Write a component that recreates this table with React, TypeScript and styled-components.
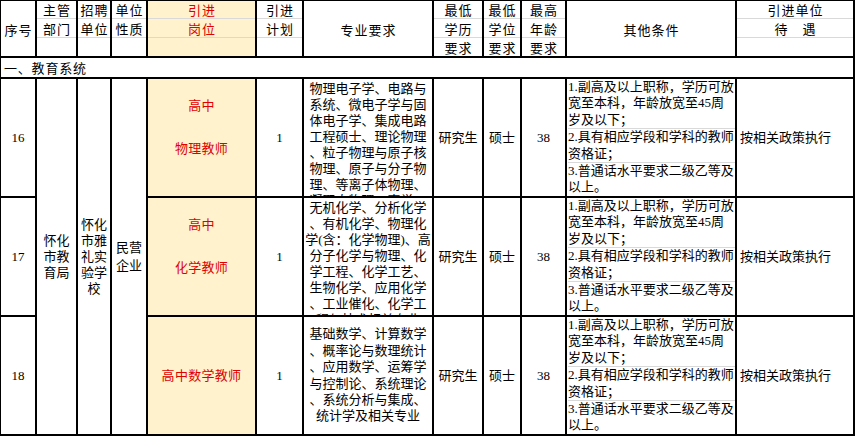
import React from "react";
import styled, { createGlobalStyle } from "styled-components";

const GlobalStyle = createGlobalStyle`
  html, body {
    margin: 0;
    padding: 0;
    background: #fff;
    overflow: hidden;
  }
  body {
    font-family: "Liberation Serif", "Noto Sans CJK SC", serif;
    color: #000;
  }
`;

const YELLOW = "#fff2cc";
const RED = "#e00000";
const RULE = "#d9d9d9";

const Sheet = styled.div`
  display: grid;
  grid-template-columns: 34px 39px 32px 34px 107px 45px 128px 48px 36px 43px 168px 116px;
  grid-template-rows: 55px 19px 117px 117px 117px;
  gap: 2px;
  padding: 2px;
  margin: -1px 0 0 -1px;
  width: max-content;
  background: #000;
  font-size: 13px;
`;

const HeadCell = styled.div<{ $post?: boolean }>`
  display: grid;
  grid-template-rows: repeat(3, 1fr);
  background: ${(p) => (p.$post ? YELLOW : "#fff")};
  color: ${(p) => (p.$post ? RED : "#000")};
`;

const HeadLine = styled.div<{ $ruled?: boolean }>`
  display: flex;
  align-items: flex-end;
  justify-content: center;
  padding-left: 1px;
  line-height: 15px;
  letter-spacing: 1px;
  white-space: nowrap;
  border-bottom: ${(p) => (p.$ruled ? `1px solid ${RULE}` : "none")};
  &:last-child {
    border-bottom: none;
  }
`;

const Section = styled.div`
  grid-column: 1 / -1;
  background: #fff;
  padding: 3px 0 0 3px;
  line-height: 16px;
  letter-spacing: 0.8px;
`;

const Cell = styled.div<{ $left?: boolean; $span?: number; $lh?: number }>`
  display: flex;
  flex-direction: column;
  justify-content: center;
  align-items: ${(p) => (p.$left ? "flex-start" : "center")};
  grid-row: ${(p) => (p.$span ? `span ${p.$span}` : "auto")};
  padding: ${(p) => (p.$left ? "0 0 0 3px" : "0")};
  background: #fff;
  line-height: ${(p) => p.$lh ?? 16}px;
  white-space: nowrap;
`;

const Post = styled.div`
  display: flex;
  flex-direction: column;
  justify-content: center;
  align-items: center;
  background: ${YELLOW};
  color: ${RED};
  line-height: 21.5px;
  letter-spacing: 0.3px;
  white-space: nowrap;
`;

const PostLine = styled.div`
  min-height: 21.5px;
`;

const Major = styled.div<{ $clip?: boolean }>`
  display: flex;
  flex-direction: column;
  align-items: center;
  justify-content: ${(p) => (p.$clip ? "flex-start" : "center")};
  padding-top: ${(p) => (p.$clip ? "1.5px" : "0")};
  overflow: hidden;
  background: #fff;
  line-height: ${(p) => (p.$clip ? 16 : 16.4)}px;
  white-space: nowrap;
`;

const Cond = styled.div`
  display: flex;
  flex-direction: column;
  padding-left: 1px;
  overflow: hidden;
  background: #fff;
  line-height: 16.4px;
  white-space: nowrap;
`;

const CondItem = styled.div`
  border-bottom: 1px solid ${RULE};
  &:last-child {
    border-bottom: none;
  }
`;

const headers: { lines: string[]; ruled: boolean; post?: boolean }[] = [
  { lines: ["", "序号", ""], ruled: false },
  { lines: ["主管", "部门", ""], ruled: true },
  { lines: ["招聘", "单位", ""], ruled: true },
  { lines: ["单位", "性质", ""], ruled: true },
  { lines: ["引进", "岗位", ""], ruled: true, post: true },
  { lines: ["引进", "计划", ""], ruled: true },
  { lines: ["", "专业要求", ""], ruled: false },
  { lines: ["最低", "学历", "要求"], ruled: true },
  { lines: ["最低", "学位", "要求"], ruled: true },
  { lines: ["最高", "年龄", "要求"], ruled: true },
  { lines: ["", "其他条件", ""], ruled: false },
  { lines: ["引进单位", "待　遇", ""], ruled: true },
];

const conditions = [
  ["1.副高及以上职称，学历可放", "宽至本科，年龄放宽至45周", "岁及以下；"],
  ["2.具有相应学段和学科的教师", "资格证；"],
  ["3.普通话水平要求二级乙等及", "以上。"],
];

const rows = [
  {
    no: "16",
    post: ["高中", "", "物理教师", ""],
    clip: true,
    major: [
      "物理电子学、电路与",
      "系统、微电子学与固",
      "体电子学、集成电路",
      "工程硕士、理论物理",
      "、粒子物理与原子核",
      "物理、原子与分子物",
      "理、等离子体物理、",
      "凝聚态物理、声学、",
    ],
  },
  {
    no: "17",
    post: ["高中", "", "化学教师", ""],
    clip: true,
    major: [
      "无机化学、分析化学",
      "、有机化学、物理化",
      "学(含：化学物理)、高",
      "分子化学与物理、化",
      "学工程、化学工艺、",
      "生物化学、应用化学",
      "、工业催化、化学工",
      "程与技术相关专业",
    ],
  },
  {
    no: "18",
    post: ["高中数学教师"],
    clip: false,
    major: [
      "基础数学、计算数学",
      "、概率论与数理统计",
      "、应用数学、运筹学",
      "与控制论、系统理论",
      "、系统分析与集成、",
      "统计学及相关专业",
    ],
  },
];

const Lines = ({ lines }: { lines: string[] }) => (
  <>
    {lines.map((l, i) => (
      <div key={i}>{l}</div>
    ))}
  </>
);

const App = () => {
  return (
    <>
      <GlobalStyle />
      <Sheet>
        {headers.map((h, i) => (
          <HeadCell key={i} $post={h.post}>
            {h.lines.map((l, j) => (
              <HeadLine key={j} $ruled={h.ruled}>
                {l}
              </HeadLine>
            ))}
          </HeadCell>
        ))}

        <Section>一、教育系统</Section>

        {rows.map((r, i) => (
          <React.Fragment key={r.no}>
            <Cell>{r.no}</Cell>
            {i === 0 && (
              <>
                <Cell $span={3}>
                  <Lines lines={["怀化", "市教", "育局"]} />
                </Cell>
                <Cell $span={3}>
                  <Lines lines={["怀化", "市雅", "礼实", "验学", "校"]} />
                </Cell>
                <Cell $span={3} $lh={18}>
                  <Lines lines={["民营", "企业"]} />
                </Cell>
              </>
            )}
            <Post>
              {r.post.map((l, j) => (
                <PostLine key={j}>{l}</PostLine>
              ))}
            </Post>
            <Cell>1</Cell>
            <Major $clip={r.clip}>
              <Lines lines={r.major} />
            </Major>
            <Cell>研究生</Cell>
            <Cell>硕士</Cell>
            <Cell>38</Cell>
            <Cond>
              {conditions.map((c, j) => (
                <CondItem key={j}>
                  <Lines lines={c} />
                </CondItem>
              ))}
            </Cond>
            <Cell $left>按相关政策执行</Cell>
          </React.Fragment>
        ))}
      </Sheet>
    </>
  );
};

export default App;
